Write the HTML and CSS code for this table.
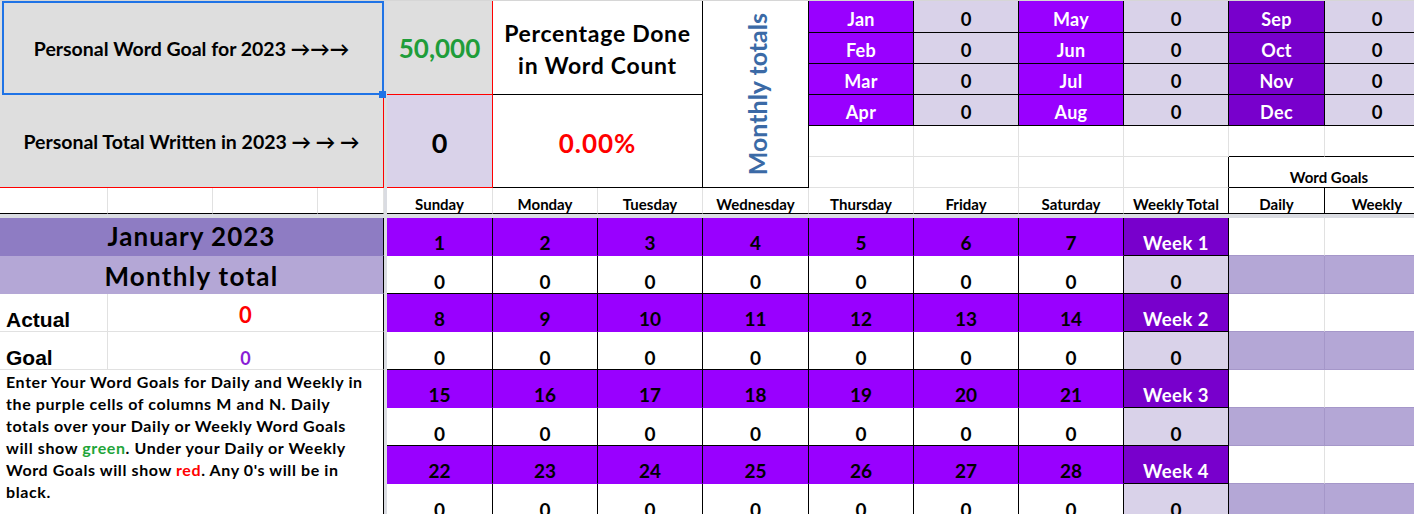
FILE: index.html
```html
<!DOCTYPE html>
<html lang="en">
<head>
<meta charset="utf-8">
<title>Word Count Tracker 2023</title>
<link rel="stylesheet" href="styles.css">
</head>
<body>
<div class="sheet">
  <div class="c goal-label">Personal Word Goal for 2023 →→→</div>
  <div class="c goal-val">50,000</div>
  <div class="c pct-label">Percentage Done<br>in Word Count</div>
  <div class="c monthly"><span class="vtext">Monthly totals</span></div>

  <div class="months">
    <div class="c mn">Jan</div><div class="c mv">0</div><div class="c mn">May</div><div class="c mv">0</div><div class="c mn dark">Sep</div><div class="c mv">0</div>
    <div class="c mn">Feb</div><div class="c mv">0</div><div class="c mn">Jun</div><div class="c mv">0</div><div class="c mn dark">Oct</div><div class="c mv">0</div>
    <div class="c mn">Mar</div><div class="c mv">0</div><div class="c mn">Jul</div><div class="c mv">0</div><div class="c mn dark">Nov</div><div class="c mv">0</div>
    <div class="c mn">Apr</div><div class="c mv">0</div><div class="c mn">Aug</div><div class="c mv">0</div><div class="c mn dark">Dec</div><div class="c mv">0</div>
  </div>

  <div class="c total-label">Personal Total Written in 2023 → → →</div>
  <div class="c total-val">0</div>
  <div class="c pct-val">0.00%</div>

  <div class="c r5"></div><div class="c r5"></div><div class="c r5"></div><div class="c r5"></div>
  <div class="c r5 line-b"></div><div class="c r5 line-b"></div>

  <div class="c r6"></div><div class="c r6"></div><div class="c r6"></div><div class="c r6 line-r"></div>
  <div class="c r6 wg">Word Goals</div>

  <div class="c r7 h"></div><div class="c r7 h"></div><div class="c r7 h"></div><div class="c r7 h"></div>
  <div class="c r7 h">Sunday</div>
  <div class="c r7 h">Monday</div>
  <div class="c r7 h">Tuesday</div>
  <div class="c r7 h">Wednesday</div>
  <div class="c r7 h">Thursday</div>
  <div class="c r7 h">Friday</div>
  <div class="c r7 h">Saturday</div>
  <div class="c r7 h line-r">Weekly Total</div>
  <div class="c r7 h line-r">Daily</div>
  <div class="c r7 h line-r">Weekly</div>

  <div class="vfreeze"></div>
  <div class="hfreeze"></div>

  <div class="panel">
    <div class="c month-title">January 2023</div>
    <div class="c month-total">Monthly total</div>
    <div class="c lbl">Actual</div>
    <div class="c act-val">0</div>
    <div class="c lbl">Goal</div>
    <div class="c goal-num">0</div>
    <div class="note">Enter Your Word Goals for Daily and Weekly in<br>the purple cells of columns M and N. Daily<br>totals over your Daily or Weekly Word Goals<br>will show <span class="green">green</span>. Under your Daily or Weekly<br>Word Goals will show <span class="red">red</span>. Any 0's will be in<br>black.</div>
  </div>

  <div class="cal">
    <div class="c d">1</div><div class="c d">2</div><div class="c d">3</div><div class="c d">4</div><div class="c d">5</div><div class="c d">6</div><div class="c d">7</div><div class="c wk">Week 1</div><div class="c g"></div><div class="c g"></div>
    <div class="c z">0</div><div class="c z">0</div><div class="c z">0</div><div class="c z">0</div><div class="c z">0</div><div class="c z">0</div><div class="c z">0</div><div class="c wt">0</div><div class="c gl"></div><div class="c gl"></div>
    <div class="c d">8</div><div class="c d">9</div><div class="c d">10</div><div class="c d">11</div><div class="c d">12</div><div class="c d">13</div><div class="c d">14</div><div class="c wk">Week 2</div><div class="c g"></div><div class="c g"></div>
    <div class="c z">0</div><div class="c z">0</div><div class="c z">0</div><div class="c z">0</div><div class="c z">0</div><div class="c z">0</div><div class="c z">0</div><div class="c wt">0</div><div class="c gl"></div><div class="c gl"></div>
    <div class="c d">15</div><div class="c d">16</div><div class="c d">17</div><div class="c d">18</div><div class="c d">19</div><div class="c d">20</div><div class="c d">21</div><div class="c wk">Week 3</div><div class="c g"></div><div class="c g"></div>
    <div class="c z">0</div><div class="c z">0</div><div class="c z">0</div><div class="c z">0</div><div class="c z">0</div><div class="c z">0</div><div class="c z">0</div><div class="c wt">0</div><div class="c gl"></div><div class="c gl"></div>
    <div class="c d">22</div><div class="c d">23</div><div class="c d">24</div><div class="c d">25</div><div class="c d">26</div><div class="c d">27</div><div class="c d">28</div><div class="c wk">Week 4</div><div class="c g"></div><div class="c g"></div>
    <div class="c z">0</div><div class="c z">0</div><div class="c z">0</div><div class="c z">0</div><div class="c z">0</div><div class="c z">0</div><div class="c z">0</div><div class="c wt">0</div><div class="c gl"></div><div class="c gl"></div>
  </div>

  <div class="sel"></div>
  <div class="handle"></div>
</div>
</body>
</html>
```

FILE: styles.css
```css
* { box-sizing: border-box; }
html, body { margin: 0; padding: 0; background: #fff; }
body {
  width: 1414px;
  height: 514px;
  overflow: hidden;
  font-family: "Lato", "DejaVu Sans", sans-serif;
  font-weight: 700;
  color: #000;
}

.sheet {
  position: relative;
  display: grid;
  grid-template-columns: 108px 105px 105px 66px 3px 106px 105px 105px 106px 105px 105px 105px 105px 96px 105px;
  grid-template-rows: 32px 31px 31px 31px 31px 31px 26px 4px repeat(8, 38px);
  border-top: 1px solid #d6d6d6;
  width: max-content;
}

.c {
  display: flex;
  align-items: flex-end;
  justify-content: center;
  border-right: 1px solid #e1e1e1;
  border-bottom: 1px solid #e1e1e1;
  font-size: 15px;
  line-height: 1;
  white-space: nowrap;
  min-width: 0;
}

/* ---------- top block ---------- */
.goal-label {
  grid-column: 1 / 5; grid-row: 1 / 4;
  background: #dedede;
  align-items: center;
  padding-top: 3px;
  font-size: 19.5px;
}
.total-label {
  grid-column: 1 / 5; grid-row: 4 / 7;
  background: #dedede;
  align-items: center;
  padding-top: 2px;
  font-size: 19.5px;
  border-right-color: #ff0000;
  border-bottom-color: #ff0000;
}
.goal-val {
  grid-column: 6; grid-row: 1 / 4;
  background: #dedede;
  color: #1f9d3a;
  font-size: 26px;
  align-items: center;
  padding-top: 1px;
  border-right-color: #ff0000;
  border-bottom-color: #ff0000;
}
.total-val {
  grid-column: 6; grid-row: 4 / 7;
  background: #d9d2e9;
  font-size: 27px;
  align-items: center;
  padding-top: 3px;
  border-right-color: #ff0000;
  border-bottom-color: #ff0000;
}
.pct-label {
  grid-column: 7 / 9; grid-row: 1 / 4;
  font-size: 23px;
  letter-spacing: 0.7px;
  line-height: 31.6px;
  text-align: center;
  align-items: center;
  padding-top: 4px;
  border-right-color: #000;
  border-bottom-color: #000;
}
.pct-val {
  grid-column: 7 / 9; grid-row: 4 / 7;
  color: #ff0000;
  font-size: 26px;
  letter-spacing: 1px;
  align-items: center;
  padding-top: 3px;
  border-right-color: #000;
  border-bottom-color: #000;
}
.monthly {
  grid-column: 9; grid-row: 1 / 7;
  align-items: center;
  color: #3b6aa6;
  font-size: 25px;
  border-right-color: #000;
  border-bottom-color: #000;
  padding-left: 3px;
}
.vtext {
  writing-mode: vertical-rl;
  transform: rotate(180deg);
  line-height: 1;
}

.months {
  grid-column: 10 / 16; grid-row: 1 / 5;
  display: grid;
  grid-template-columns: 105px 105px 105px 105px 96px 105px;
  grid-template-rows: 32px 31px 31px 31px;
}
.mn {
  background: #9900ff;
  color: #fff;
  font-size: 18px;
  letter-spacing: 0.3px;
  padding-bottom: 4px;
  border-right-color: #000;
  border-bottom-color: #000;
}
.mn.dark { background: #7800cc; }
.mv {
  background: #d9d2e9;
  font-size: 18.5px;
  padding-bottom: 4px;
  border-right-color: #000;
  border-bottom-color: #000;
}

.r5 { grid-row: 5; }
.r6 { grid-row: 6; }
.r7 { grid-row: 7; border-bottom-color: #000; }
.line-b { border-bottom-color: #000; }
.line-r { border-right-color: #000; }
.wg {
  grid-column: span 2;
  border-bottom-color: #000;
  padding-bottom: 2px;
}
.h { padding-bottom: 1px; }

.vfreeze { grid-column: 5; grid-row: 1 / -1; background: #dadce2; }
.hfreeze { grid-column: 1 / -1; grid-row: 8; background: #dadce2; }

/* ---------- left panel ---------- */
.panel {
  grid-column: 1 / 5; grid-row: 9 / 17;
  display: grid;
  grid-template-columns: 108px 105px 105px 66px;
  grid-template-rows: repeat(8, 38px);
}
.month-title {
  grid-column: 1 / 5;
  background: #8e7cc3;
  font-size: 26px;
  letter-spacing: 1px;
  padding-bottom: 6px;
  border-right-color: #000;
  border-bottom-color: #8e7cc3;
}
.month-total {
  grid-column: 1 / 5;
  background: #b4a7d6;
  font-size: 26px;
  letter-spacing: 1.3px;
  padding-bottom: 4px;
  border-right-color: #000;
  border-bottom-color: #b4a7d6;
}
.lbl {
  justify-content: flex-start;
  padding-left: 6px;
  padding-bottom: 1px;
  font-family: "Liberation Sans", Arial, sans-serif;
  font-size: 21px;
}
.act-val {
  grid-column: 2 / 5;
  color: #ff0000;
  font-size: 22px;
  padding-bottom: 5px;
  border-right-color: #000;
}
.goal-num {
  grid-column: 2 / 5;
  color: #8a1ed6;
  font-size: 18px;
  padding-bottom: 2px;
  border-right-color: #000;
}
.note {
  grid-column: 1 / 5;
  grid-row: 5 / 9;
  border-right: 1px solid #000;
  font-size: 16px;
  letter-spacing: 0.6px;
  line-height: 22px;
  padding: 1px 0 0 6px;
  white-space: nowrap;
}
.green { color: #1fa53a; }
.red { color: #ff0000; }

/* ---------- calendar ---------- */
.cal {
  grid-column: 6 / 16; grid-row: 9 / 17;
  display: grid;
  grid-template-columns: 106px 105px 105px 106px 105px 105px 105px 105px 96px 105px;
  grid-template-rows: repeat(8, 38px);
}
.d {
  background: #9900ff;
  font-size: 19px;
  padding-bottom: 3px;
  border-right-color: #000;
  border-bottom-color: #9900ff;
}
.z {
  font-size: 19px;
  padding-bottom: 2px;
  border-right-color: #000;
  border-bottom-color: #000;
}
.wk {
  background: #7800cc;
  color: #fff;
  font-size: 18.5px;
  letter-spacing: 0.5px;
  padding-bottom: 3px;
  border-right-color: #000;
  border-bottom-color: #000;
}
.wt {
  background: #d9d2e9;
  font-size: 19px;
  padding-bottom: 2px;
  border-right-color: #000;
  border-bottom-color: #000;
}
.g { border-bottom-color: #a597c9; }
.gl {
  background: #b4a7d6;
  border-right-color: #a597c9;
  border-bottom-color: #a597c9;
}

/* ---------- selection overlay ---------- */
.sel {
  position: absolute;
  left: 2px; top: 0;
  width: 382px; height: 94px;
  border: 2px solid #1f73e6;
  pointer-events: none;
}
.handle {
  position: absolute;
  left: 379px; top: 90px;
  width: 7px; height: 7px;
  background: #1f73e6;
}
```
